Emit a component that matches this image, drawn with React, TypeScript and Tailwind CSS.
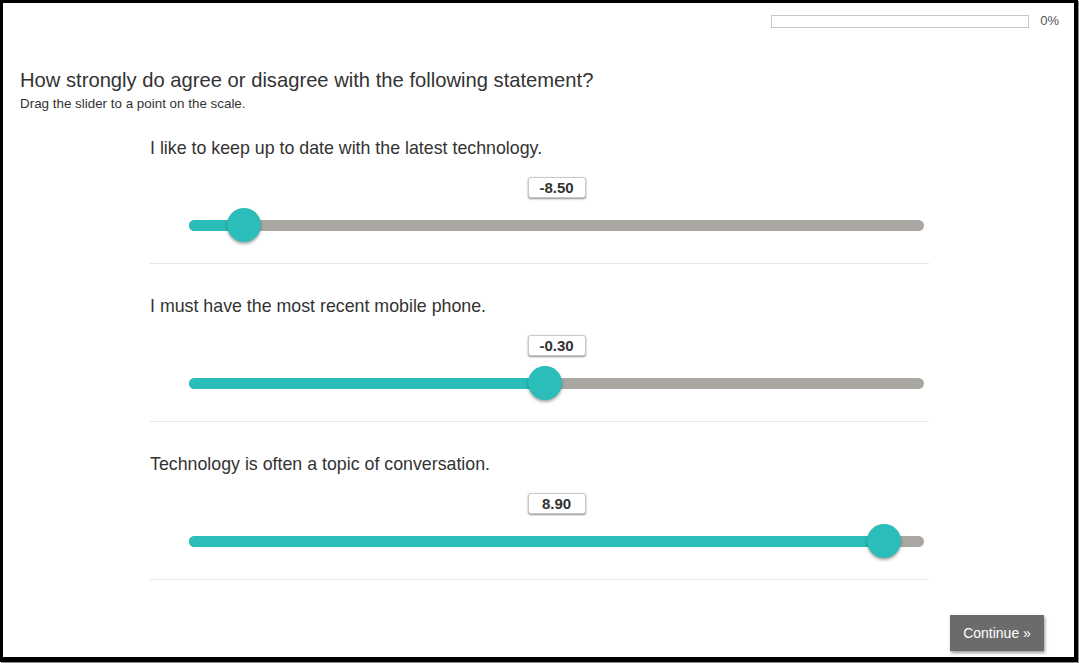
import React from "react";

const items = [
  { text: "I like to keep up to date with the latest technology.", value: -8.5 },
  { text: "I must have the most recent mobile phone.", value: -0.3 },
  { text: "Technology is often a topic of conversation.", value: 8.9 },
];

function Slider({ text, value }: { text: string; value: number }) {
  const frac = (value + 10) / 20;
  return (
    <div className="border-b border-[#e6e6e6]">
      <div className="text-[17.8px] leading-[22px] text-[#333]">{text}</div>
      <div className="pl-[39px] pr-[5px]">
        <div className="mt-[18px] flex justify-center">
          <div className="h-[21px] w-[58px] rounded-[3px] border border-[#c8c8c8] bg-white text-center text-[15px] font-bold leading-[19px] text-[#333] shadow-[0_1px_2px_rgba(0,0,0,0.45)]">
            {value.toFixed(2)}
          </div>
        </div>
        <div className="relative mt-[22px] mb-[32px] h-[11px] rounded-full bg-[#aaa7a3]">
          <div
            className="absolute left-0 top-0 h-[11px] rounded-full bg-[#2bbdb9]"
            style={{ width: `${frac * 100}%` }}
          />
          <div
            className="absolute top-[-12px] h-[34px] w-[34px] -translate-x-1/2 rounded-full bg-[#2bbdb9] shadow-[0_2px_3px_rgba(0,0,0,0.35)]"
            style={{ left: `${frac * 100}%` }}
          />
        </div>
      </div>
    </div>
  );
}

export default function App() {
  return (
    <div
      className="relative h-[663px] w-[1079px] overflow-hidden bg-white"
      style={{ fontFamily: '"Liberation Sans", Arial, sans-serif' }}
    >
      <div className="flex h-[662px] w-[1078px] flex-col border-l-[3px] border-t-[3px] border-r-[4px] border-b-[5px] border-black shadow-[1px_1px_0_#8a8a8a]">
        <div className="flex items-center justify-end pr-[15px] pt-[11px]">
          <div className="h-[13px] w-[258px] border border-[#c8c8c8] bg-white" />
          <div className="ml-[11px] text-[13px] leading-[14px] text-[#555]">0%</div>
        </div>
        <div className="pl-[17px] pt-[40px]">
          <div className="text-[20.2px] leading-[24px] text-[#333]">
            How strongly do agree or disagree with the following statement?
          </div>
          <div className="mt-[4px] text-[13.4px] leading-[16px] text-[#333]">
            Drag the slider to a point on the scale.
          </div>
        </div>
        <div className="ml-[147px] mt-[25px] flex w-[779px] flex-col gap-[31px]">
          {items.map((it) => (
            <Slider key={it.text} text={it.text} value={it.value} />
          ))}
        </div>
        <div className="flex flex-1 items-end justify-end pb-[6px] pr-[30px]">
          <button className="h-[36px] w-[94px] bg-[#6b6b6b] text-[14px] text-white shadow-[1px_2px_3px_rgba(0,0,0,0.4)]">
            Continue »
          </button>
        </div>
      </div>
    </div>
  );
}
